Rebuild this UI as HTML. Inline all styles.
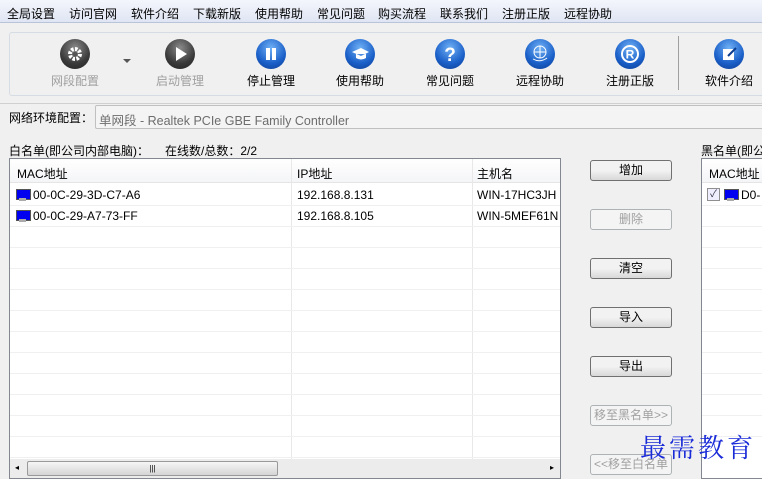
<!DOCTYPE html>
<html><head><meta charset="utf-8"><style>
*{margin:0;padding:0;box-sizing:border-box}
body{width:762px;height:479px;overflow:hidden;background:#f0f0f0;font-family:"Liberation Sans","Noto Sans CJK SC",sans-serif;font-size:12px;color:#000;position:relative}
.a{position:absolute;white-space:nowrap}
#menu{position:absolute;left:0;top:0;width:762px;height:23px;background:linear-gradient(#f4f6fc,#dfe5f3);border-bottom:1px solid #b9c3d9}
#menu span{position:absolute;top:5px}
#tb{position:absolute;left:9px;top:32px;width:760px;height:64px;border:1px solid #d6dce4;border-right:none;background:#f0f0f0;border-radius:3px}
.ic{position:absolute;top:39px;width:30px;height:30px;border-radius:50%}
.g{background:radial-gradient(circle at 50% 30%,#8a8a8a,#3a3a3a 60%,#222)}
.b{background:radial-gradient(circle at 50% 30%,#6fb0f5,#1a5fc8 60%,#0d3d8f)}
.ic svg{position:absolute;left:0;top:0}
.lb{position:absolute;top:72px;width:90px;text-align:center}
.btn{position:absolute;left:590px;width:82px;height:21px;border:1px solid #707070;border-radius:3px;background:linear-gradient(#f2f2f2 50%,#d8d8d8);text-align:center;line-height:19px}
.dis{border-color:#adb2b5;background:#f4f4f4;color:#a0a0a0}
.tbl{position:absolute;background:#fff;border:1px solid #828790}
.row{position:absolute;left:0;height:1px;background:#f0f0f0}
.mon{display:inline-block;width:13px;height:12px;vertical-align:-2px;margin-right:4px;position:relative}
.mon:before{content:"";position:absolute;left:0;top:0;width:13px;height:9px;background:#0000f0;border:1px solid #555}
.mon:after{content:"";position:absolute;left:3px;top:9px;width:7px;height:3px;background:#aaa}
</style></head><body>
<div id="menu">
<span style="left:7px">全局设置</span><span style="left:69px">访问官网</span><span style="left:131px">软件介绍</span><span style="left:193px">下载新版</span><span style="left:255px">使用帮助</span><span style="left:317px">常见问题</span><span style="left:378px">购买流程</span><span style="left:440px">联系我们</span><span style="left:502px">注册正版</span><span style="left:564px">远程协助</span>
</div>
<div id="tb"></div>
<div class="ic g" style="left:60px"><svg width="30" height="30"><circle cx="15" cy="15" r="5" fill="none" stroke="#fff" stroke-width="4" stroke-dasharray="2.5 1.4"/><circle cx="15" cy="15" r="2" fill="#555"/></svg></div>
<div class="a" style="left:123px;top:59px;width:0;height:0;border-left:4px solid transparent;border-right:4px solid transparent;border-top:4px solid #555"></div>
<div class="ic g" style="left:165px"><svg width="30" height="30"><path d="M11 8 L22 15 L11 22Z" fill="#fff"/></svg></div>
<div class="ic b" style="left:256px"><svg width="30" height="30"><rect x="10" y="9" width="4" height="12" fill="#fff"/><rect x="16" y="9" width="4" height="12" fill="#fff"/></svg></div>
<div class="ic b" style="left:345px"><svg width="30" height="30"><path d="M7 13 L16 9 L24 13 L16 17Z M11 15 v4 q5 3 10 0 v-4" fill="#fff"/></svg></div>
<div class="ic b" style="left:435px"><svg width="30" height="30"><text x="15" y="22" font-size="19" font-weight="bold" fill="#fff" text-anchor="middle" font-family="Liberation Sans">?</text></svg></div>
<div class="ic b" style="left:525px"><svg width="30" height="30"><circle cx="15" cy="13" r="6" fill="none" stroke="#fff"/><path d="M9 13h12M15 7v12M8 20q7 4 14 -1" fill="none" stroke="#fff"/></svg></div>
<div class="ic b" style="left:615px"><svg width="30" height="30"><circle cx="15" cy="15" r="8" fill="none" stroke="#fff" stroke-width="2"/><text x="15" y="19.5" font-size="12" font-weight="bold" fill="#fff" text-anchor="middle" font-family="Liberation Sans">R</text></svg></div>
<div class="a" style="left:678px;top:36px;width:1px;height:54px;background:#a0a0a0"></div>
<div class="ic b" style="left:714px"><svg width="30" height="30"><rect x="9" y="10" width="11" height="11" fill="#fff"/><path d="M14 17 L22 9" stroke="#0d3d8f" stroke-width="2"/></svg></div>
<div class="lb" style="left:30px;color:#a0a0a0">网段配置</div>
<div class="lb" style="left:135px;color:#a0a0a0">启动管理</div>
<div class="lb" style="left:226px">停止管理</div>
<div class="lb" style="left:315px">使用帮助</div>
<div class="lb" style="left:405px">常见问题</div>
<div class="lb" style="left:495px">远程协助</div>
<div class="lb" style="left:585px">注册正版</div>
<div class="lb" style="left:684px">软件介绍</div>
<div class="a" style="left:0;top:103px;width:762px;height:1px;background:#d0d0d0"></div>
<div class="a" style="left:9px;top:109px">网络环境配置：</div>
<div class="a" style="left:95px;top:105px;width:680px;height:24px;border:1px solid #c0c0c0;border-radius:2px;background:#f4f4f4;color:#6d6d6d;padding:4px 0 0 3px;font-size:12.5px">单网段 - Realtek PCIe GBE Family Controller</div>
<div class="a" style="left:9px;top:142px">白名单(即公司内部电脑)：</div>
<div class="a" style="left:165px;top:142px">在线数/总数：2/2</div>
<div class="tbl" style="left:9px;top:158px;width:552px;height:321px">
<div class="a" style="left:0;top:0;width:550px;height:24px;background:linear-gradient(#fff,#f4f5f7);border-bottom:1px solid #e5e5e5"></div>
<div class="a" style="left:7px;top:6px">MAC地址</div><div class="a" style="left:287px;top:6px">IP地址</div><div class="a" style="left:467px;top:6px">主机名</div>
<div class="a" style="left:281px;top:0;width:1px;height:300px;background:#e8e8e8"></div>
<div class="a" style="left:462px;top:0;width:1px;height:300px;background:#e8e8e8"></div>
<div class="a" style="left:6px;top:29px"><span class="mon"></span>00-0C-29-3D-C7-A6</div><div class="a" style="left:287px;top:29px">192.168.8.131</div><div class="a" style="left:467px;top:29px;width:83px;overflow:hidden">WIN-17HC3JH</div>
<div class="a" style="left:6px;top:50px"><span class="mon"></span>00-0C-29-A7-73-FF</div><div class="a" style="left:287px;top:50px">192.168.8.105</div><div class="a" style="left:467px;top:50px;width:83px;overflow:hidden">WIN-5MEF61N</div>
<div class="row" style="top:46px;width:550px"></div><div class="row" style="top:67px;width:550px"></div><div class="row" style="top:88px;width:550px"></div><div class="row" style="top:109px;width:550px"></div><div class="row" style="top:130px;width:550px"></div><div class="row" style="top:151px;width:550px"></div><div class="row" style="top:172px;width:550px"></div><div class="row" style="top:193px;width:550px"></div><div class="row" style="top:214px;width:550px"></div><div class="row" style="top:235px;width:550px"></div><div class="row" style="top:256px;width:550px"></div><div class="row" style="top:277px;width:550px"></div><div class="row" style="top:298px;width:550px"></div>
<div class="a" style="left:0;top:300px;width:550px;height:19px;background:#ececec"></div>
<div class="a" style="left:17px;top:302px;width:251px;height:15px;border:1px solid #999;border-radius:2px;background:linear-gradient(#f5f5f5,#d5d5d5);text-align:center;font-size:8px;line-height:13px">|||</div>
<div class="a" style="left:5px;top:304px;font-size:8px">◂</div><div class="a" style="left:540px;top:304px;font-size:8px">▸</div>
</div>
<div class="btn" style="top:160px">增加</div>
<div class="btn dis" style="top:209px">删除</div>
<div class="btn" style="top:258px">清空</div>
<div class="btn" style="top:307px">导入</div>
<div class="btn" style="top:356px">导出</div>
<div class="btn dis" style="top:405px">移至黑名单&gt;&gt;</div>
<div class="btn dis" style="top:454px">&lt;&lt;移至白名单</div>
<div class="a" style="left:701px;top:142px">黑名单(即公司</div>
<div class="tbl" style="left:701px;top:158px;width:70px;height:321px">
<div class="a" style="left:0;top:0;width:70px;height:24px;background:linear-gradient(#fff,#f4f5f7);border-bottom:1px solid #e5e5e5"></div>
<div class="a" style="left:7px;top:6px">MAC地址</div>
<div class="a" style="left:5px;top:29px;width:13px;height:13px;border:1px solid #8f8f8f;background:#eef;font-size:10px;line-height:11px;color:#334;text-align:center">✓</div>
<div class="a" style="left:22px;top:29px"><span class="mon"></span>D0-</div>
<div class="row" style="top:46px;width:70px"></div><div class="row" style="top:67px;width:70px"></div><div class="row" style="top:88px;width:70px"></div><div class="row" style="top:109px;width:70px"></div><div class="row" style="top:130px;width:70px"></div><div class="row" style="top:151px;width:70px"></div><div class="row" style="top:172px;width:70px"></div><div class="row" style="top:193px;width:70px"></div><div class="row" style="top:214px;width:70px"></div><div class="row" style="top:235px;width:70px"></div><div class="row" style="top:256px;width:70px"></div><div class="row" style="top:277px;width:70px"></div>
</div>
<div class="a" style="left:640px;top:428px;font-family:'Noto Serif CJK SC',serif;font-size:26px;color:#1a2bd8;letter-spacing:3px">最需教育</div>
</body></html>
